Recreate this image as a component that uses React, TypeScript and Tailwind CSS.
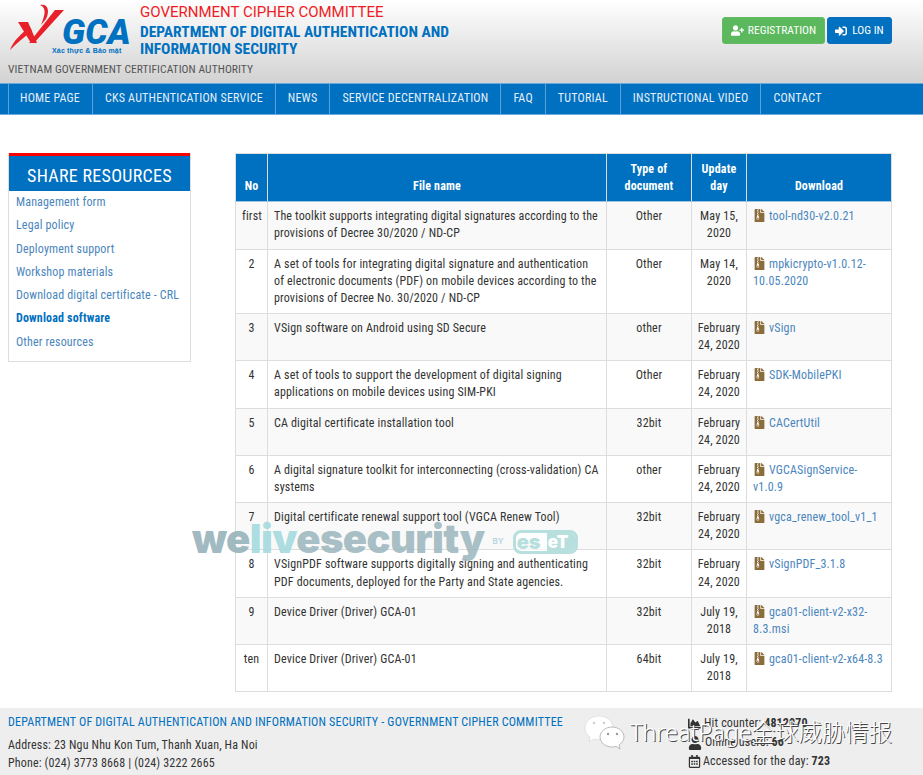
import { FaFileArchive, FaUserPlus, FaSignInAlt, FaUser, FaRegCalendarAlt, FaChartArea } from "react-icons/fa";

const NAV = [
  "HOME PAGE",
  "CKS AUTHENTICATION SERVICE",
  "NEWS",
  "SERVICE DECENTRALIZATION",
  "FAQ",
  "TUTORIAL",
  "INSTRUCTIONAL VIDEO",
  "CONTACT",
];

const SIDE = [
  "Management form",
  "Legal policy",
  "Deployment support",
  "Workshop materials",
  "Download digital certificate - CRL",
  "Download software",
  "Other resources",
];

const ROWS = [
  ["first", "The toolkit supports integrating digital signatures according to the provisions of Decree 30/2020 / ND-CP", "Other", "May 15, 2020", "tool-nd30-v2.0.21"],
  ["2", "A set of tools for integrating digital signature and authentication of electronic documents (PDF) on mobile devices according to the provisions of Decree No. 30/2020 / ND-CP", "Other", "May 14, 2020", "mpkicrypto-v1.0.12-10.05.2020"],
  ["3", "VSign software on Android using SD Secure", "other", "February 24, 2020", "vSign"],
  ["4", "A set of tools to support the development of digital signing applications on mobile devices using SIM-PKI", "Other", "February 24, 2020", "SDK-MobilePKI"],
  ["5", "CA digital certificate installation tool", "32bit", "February 24, 2020", "CACertUtil"],
  ["6", "A digital signature toolkit for interconnecting (cross-validation) CA systems", "other", "February 24, 2020", "VGCASignService-v1.0.9"],
  ["7", "Digital certificate renewal support tool (VGCA Renew Tool)", "32bit", "February 24, 2020", "vgca_renew_tool_v1_1"],
  ["8", "VSignPDF software supports digitally signing and authenticating PDF documents, deployed for the Party and State agencies.", "32bit", "February 24, 2020", "vSignPDF_3.1.8"],
  ["9", "Device Driver (Driver) GCA-01", "32bit", "July 19, 2018", "gca01-client-v2-x32-8.3.msi"],
  ["ten", "Device Driver (Driver) GCA-01", "64bit", "July 19, 2018", "gca01-client-v2-x64-8.3"],
];

function Logo() {
  return (
    <div className="relative h-[54px] w-[122px] shrink-0">
      <svg viewBox="0 0 122 54" className="absolute inset-0 h-full w-full" fill="#e8202a">
        <path d="M8 19 L18 19 L27 40 L21 40 Z" />
        <path d="M45 7 L54 7 L24 40 L19 40 Z" />
        <path d="M0 47 C3 38 12 30 20 24 L22 28 C14 34 6 41 0 47 Z" />
        <path d="M30 2 C38 0 40 8 36 16 L31 22 C35 12 37 5 30 2 Z" />
      </svg>
      <span className="absolute left-[52px] top-[12px] text-[35px] font-black italic leading-none tracking-normal text-[#0070c0] [font-stretch:88%]">
        GCA
      </span>
      <span className="absolute left-[42px] top-[44px] font-['Liberation_Sans',sans-serif] text-[7px] font-bold leading-none text-[#0070c0]">
        Xác thực &amp; Bảo mật
      </span>
    </div>
  );
}

export default function App() {
  return (
    <div className="relative h-[775px] w-[923px] overflow-hidden bg-white font-['Roboto',sans-serif] text-[12px] leading-[17.14px] tracking-[0.16px] text-[#333] [font-stretch:75%]">
      <header className="flex h-[83px] items-start justify-between bg-gradient-to-b from-white to-[#d2d2d2] pl-2 pr-[10px]">
        <div className="flex flex-col">
          <div className="flex pt-[3px]">
            <div className="ml-[2px]">
              <Logo />
            </div>
            <div className="ml-[8px]">
              <div className="text-[15px] leading-[19px] tracking-normal text-[#f01c24] [font-stretch:100%]">GOVERNMENT CIPHER COMMITTEE</div>
              <div className="mt-[2px] text-[15.500px] font-bold leading-[17px] tracking-normal text-[#0070c0]">
                DEPARTMENT OF DIGITAL AUTHENTICATION AND
                <br />
                INFORMATION SECURITY
              </div>
            </div>
          </div>
          <div className="mt-[3px] text-[11.500px] leading-[17px] tracking-[0.07px] text-[#555]">VIETNAM GOVERNMENT CERTIFICATION AUTHORITY</div>
        </div>
        <div className="mr-[21px] mt-[17px] flex gap-[2px]">
          <button className="flex h-[27px] w-[103px] items-center justify-center gap-[4px] rounded-[3px] border border-[#64bb64] bg-[#5cb85c] text-[11.500px] tracking-normal text-white">
            <FaUserPlus className="text-[13px]" /> REGISTRATION
          </button>
          <button className="flex h-[27px] w-[65px] items-center justify-center gap-[5px] rounded-[3px] border border-[#0a6ebd] bg-[#0070c0] text-[11.500px] tracking-normal text-white">
            <FaSignInAlt className="text-[12px]" /> LOG IN
          </button>
        </div>
      </header>

      <nav className="flex h-[32px] items-stretch border-y border-[#6aa9dc] bg-[#0070c0] pl-2">
        {NAV.map((n, i) => (
          <a
            key={n}
            className={`flex items-center border-r border-[#5ba0d6] pr-3 text-[12px] tracking-[0.2px] text-[#e4eff8] ${i === 0 ? "border-l pl-[11px]" : "pl-3"} ${i === NAV.length - 1 ? "border-r-0" : ""}`}
          >
            {n}
          </a>
        ))}
      </nav>

      <main className="flex items-start pl-2 pt-[38px]">
        <aside className="w-[183px] shrink-0 border border-t-0 border-[#ddd]">
          <div className="border-t-[3px] border-[#f00] bg-[#0070c0] pb-[3px] pt-[8px] text-center text-[18px] leading-[24px] tracking-[0.3px] text-white">
            SHARE RESOURCES
          </div>
          <ul className="pb-[6px] pl-[7px] pt-[1px]">
            {SIDE.map((s) => (
              <li key={s} className={`h-[23.3px] leading-[20px] ${s === "Download software" ? "font-bold text-[#0070c0]" : "text-[#4a86bd]"}`}>
                {s}
              </li>
            ))}
          </ul>
        </aside>

        <table className="ml-[44px] w-[656px] table-fixed border-collapse">
          <colgroup>
            <col className="w-[32px]" />
            <col className="w-[339px]" />
            <col className="w-[85px]" />
            <col className="w-[55px]" />
            <col className="w-[145px]" />
          </colgroup>
          <thead>
            <tr className="bg-[#0070c0] text-white">
              {["No", "File name", "Type of document", "Update day", "Download"].map((h) => (
                <th key={h} className="border border-[#ddd] border-b-[#9fc4e2] px-[6px] pb-[6px] pt-[7px] align-bottom text-center font-bold">
                  {h}
                </th>
              ))}
            </tr>
          </thead>
          <tbody>
            {ROWS.map((r, i) => (
              <tr key={r[0]} className={i % 2 === 0 ? "bg-[#f9f9f9]" : "bg-white"}>
                <td className="border border-[#ddd] p-[6px] text-center align-top">{r[0]}</td>
                <td className="border border-[#ddd] p-[6px] align-top">{r[1]}</td>
                <td className="border border-[#ddd] p-[6px] text-center align-top">{r[2]}</td>
                <td className="border border-[#ddd] px-[2px] py-[6px] text-center align-top">{r[3]}</td>
                <td className="border border-[#ddd] p-[6px] align-top text-[#4a86bd]">
                  <FaFileArchive className="mr-[3px] inline-block align-[-2px] text-[13px] text-[#8a6d3b]" />
                  {r[4]}
                </td>
              </tr>
            ))}
          </tbody>
        </table>
      </main>

      <footer className="absolute inset-x-0 top-[708px] flex h-[67px] justify-between bg-[#eee] pl-2 pr-[10px] pt-[6px]">
        <div>
          <div className="tracking-[0.2px] text-[#0070c0]">DEPARTMENT OF DIGITAL AUTHENTICATION AND INFORMATION SECURITY - GOVERNMENT CIPHER COMMITTEE</div>
          <div className="mt-[5px] leading-[18px]">Address: 23 Ngu Nhu Kon Tum, Thanh Xuan, Ha Noi</div>
          <div className="leading-[18px]">Phone: (024) 3773 8668 | (024) 3222 2665</div>
        </div>
        <div className="w-[225px] text-[#333]">
          <div className="flex h-[19px] items-center gap-[3px]"><FaChartArea className="text-[13px]" /> <span>Hit counter: <b>4812070</b></span></div>
          <div className="flex h-[19px] items-center gap-[3px]"><FaUser className="text-[14px]" /> <span>Online users: <b>66</b></span></div>
          <div className="flex h-[19px] items-center gap-[2px]"><FaRegCalendarAlt className="text-[13px]" /> <span>Accessed for the day: <b>723</b></span></div>
        </div>
      </footer>

      {/* pasted watermarks, they sit over the page */}
      <div className="pointer-events-none absolute left-[192px] top-[514px] flex items-center font-['Inter',sans-serif] tracking-normal [font-stretch:100%]">
        <span className="text-[40px] font-black leading-[50px] tracking-[-0.6px]">
          <span className="text-[#94b1b9]/90">we</span>
          <span className="text-[#a3dade]/90">liv</span>
          <span className="text-[#9eb7bf]/90">esecurity</span>
        </span>
        <span className="ml-[8px] mt-[6px] text-[8px] font-bold text-[#bcd6e0]">BY</span>
        <span className="relative ml-[9px] mt-[6px] flex h-[24px] w-[65px] items-center rounded-[8px] border-[3px] border-[#b7dfde] bg-white/60 font-black leading-none">
          <span className="w-[31px] pl-[1px] text-[20px] leading-[18px] text-[#b7dfde]">es</span>
          <span className="flex h-full flex-1 items-center rounded-r-[5px] bg-[#b7dfde] pl-[1px] text-[17px] text-white">eT</span>
        </span>
      </div>
      <div className="pointer-events-none absolute left-[584px] top-[714px] flex items-center">
        <svg viewBox="0 0 42 36" className="h-[36px] w-[42px]" fill="white" stroke="#aaa" strokeWidth="0.8">
          <path d="M15 2C7 2 1 7 1 14c0 4 2 7 5 9l-1 5 5-3c2 .6 3 .8 5 .8 8 0 14-5 14-11.800S23 2 15 2z" stroke="#ddd" />
          <path d="M28 13c-6.500 0-12 4.500-12 10s5.500 10 12 10c1.500 0 3-.3 4-.7l4 2.700-1-4c3-2 5-5 5-8 0-5.500-5.500-10-12-10z" />
          <circle cx="10" cy="9" r="1.200" fill="#ccc" stroke="none" />
          <circle cx="20" cy="9" r="1.200" fill="#ccc" stroke="none" />
          <circle cx="24" cy="20" r="1.200" fill="#999" stroke="none" />
          <circle cx="33" cy="20" r="1.200" fill="#999" stroke="none" />
        </svg>
        <span className="ml-[4px] font-['Noto_Sans','Noto_Sans_CJK_SC',sans-serif] text-[23.400px] font-light leading-[30px] tracking-normal text-white [font-stretch:100%] [text-shadow:1px_1px_0_#444]">
          ThreatPage全球威胁情报
        </span>
      </div>
    </div>
  );
}
